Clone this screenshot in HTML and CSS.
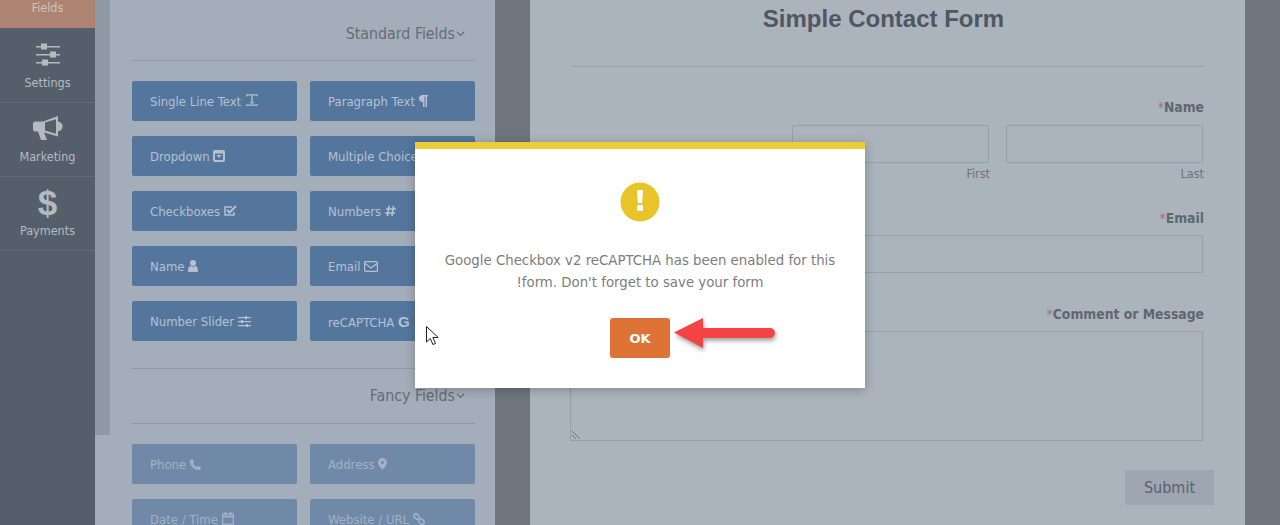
FILE: index.html
```html
<!DOCTYPE html>
<html lang="en">
<head>
    <meta charset="UTF-8">
    <meta name="viewport" content="width=device-width, initial-scale=1.0">
    <title>Simple Contact Form</title>
    <link rel="stylesheet" href="styles.css">
</head>
<body>

<div class="layout">
    <nav class="sidebar">
        <a class="side-item side-active"><span>Fields</span></a>
        <a class="side-item side-settings">
            <svg class="side-icon" width="26" height="24" viewBox="0 0 26 24" fill="currentColor">
                <path d="M1 3h24v1.600H1zM1 11h24v1.600H1zM1 19h24v1.600H1z"/>
                <path d="M6 .5h6v6H6zM15 8.500h6v6h-6zM7 16.500h6v6H7z"/>
            </svg>
            <span>Settings</span>
        </a>
        <a class="side-item">
            <svg class="side-icon" width="30" height="26" viewBox="0 0 30 26" fill="currentColor">
                <path d="M0 9c0-1.500 1-2.500 2.500-2.500H10L25 1v5.500C28 7 29.500 9 29.500 11.500S28 16 25 16.500V21.500L11 17.500l3 7.500H8L5 16.500H2.500C1 16.500 0 15.500 0 14z"/>
                <path fill="#555f6b" d="M12 7.500v8l11 3.200V4.300z"/>
            </svg>
            <span>Marketing</span>
        </a>
        <a class="side-item">
            <span class="side-dollar">$</span>
            <span>Payments</span>
        </a>
    </nav>

    <div class="scroll-track"><div class="scroll-thumb"></div></div>

    <section class="fields-panel">
        <h3 class="group-title group-first">Standard Fields<svg class="chev" width="9" height="6" viewBox="0 0 9 6"><path d="M1 1l3.500 3.500L8 1" fill="none" stroke="currentColor" stroke-width="1.200"/></svg></h3>
        <div class="field-grid">
            <button class="field-btn">Single Line Text
                <svg width="14" height="14" viewBox="0 0 15 14" fill="none" stroke="currentColor" stroke-width="1.400"><path d="M2 3V1.500h11V3M7.500 1.500V10M5.500 10h4M1 12.500h13"/></svg>
            </button>
            <button class="field-btn">Paragraph Text
                <svg width="9" height="12" viewBox="0 0 9 12" fill="currentColor"><path d="M4 0h5v1.500H8V12H6.500V1.500h-1V12H4V7C1.500 7 0 5.500 0 3.500S1.500 0 4 0z"/></svg>
            </button>
            <button class="field-btn">Dropdown
                <svg width="12" height="12" viewBox="0 0 12 12" fill="currentColor"><path fill-rule="evenodd" d="M2 0h8a2 2 0 012 2v8a2 2 0 01-2 2H2a2 2 0 01-2-2V2a2 2 0 012-2zM2 3.500V10h8V3.500zM3.500 5h5L6 8z"/></svg>
            </button>
            <button class="field-btn">Multiple Choice</button>
            <button class="field-btn">Checkboxes
                <svg width="13" height="12" viewBox="0 0 13 12" fill="none" stroke="currentColor" stroke-width="1.500"><path d="M10 7v3H1V2h7"/><path d="M3 5l2.500 2.500L12 1" stroke-width="2"/></svg>
            </button>
            <button class="field-btn">Numbers
                <svg width="11" height="12" viewBox="0 0 11 12" fill="none" stroke="currentColor" stroke-width="1.700"><path d="M4 1L2.500 11M8.500 1L7 11M1 4h10M0 8h10"/></svg>
            </button>
            <button class="field-btn">Name
                <svg width="10" height="12" viewBox="0 0 10 12" fill="currentColor"><circle cx="5" cy="3" r="3"/><path d="M0 11c0-4 1.500-5 2.500-5 1.500 1 3.500 1 5 0 1 0 2.500 1 2.500 5 0 .5-.5 1-1 1H1c-.5 0-1-.5-1-1z"/></svg>
            </button>
            <button class="field-btn">Email
                <svg width="14" height="11" viewBox="0 0 14 11" fill="none" stroke="currentColor" stroke-width="1.200"><rect x=".6" y=".6" width="12.800" height="9.800" rx="1"/><path d="M1 2.500l6 4.500 6-4.500"/></svg>
            </button>
            <button class="field-btn">Number Slider
                <svg width="13" height="11" viewBox="0 0 13 11" fill="currentColor"><path d="M0 1h13v1.200H0zM0 5h13v1.200H0zM0 9h13v1.200H0z"/><path d="M7 0h2v3.200H7zM3 4h2v3.200H3zM8 8h2v3H8z"/></svg>
            </button>
            <button class="field-btn">reCAPTCHA <b class="g-mark">G</b></button>
        </div>

        <hr class="panel-rule rule-fancy">
        <h3 class="group-title">Fancy Fields<svg class="chev" width="9" height="6" viewBox="0 0 9 6"><path d="M1 1l3.500 3.500L8 1" fill="none" stroke="currentColor" stroke-width="1.200"/></svg></h3>
        <div class="field-grid fancy">
            <button class="field-btn">Phone
                <svg width="11" height="11" viewBox="0 0 11 11" fill="currentColor"><path d="M2.500 0L4 3 3 4.200C3.500 5.700 5.300 7.500 6.800 8L8 7l3 1.500c0 1.300-1 2.500-2.500 2.500C4 11 0 7 0 2.500 0 1 1.200 0 2.500 0z"/></svg>
            </button>
            <button class="field-btn">Address
                <svg width="9" height="12" viewBox="0 0 9 12" fill="currentColor"><path fill-rule="evenodd" d="M4.500 0A4.500 4.500 0 019 4.500C9 7 6 10 4.500 12 3 10 0 7 0 4.500A4.500 4.500 0 014.500 0zm0 3a1.500 1.500 0 100 3 1.500 1.500 0 000-3z"/></svg>
            </button>
            <button class="field-btn">Date / Time
                <svg width="12" height="13" viewBox="0 0 12 13" fill="none" stroke="currentColor" stroke-width="1.300"><rect x=".7" y="2" width="10.600" height="10.300"/><path d="M.7 4.500h10.600" stroke-width="2"/><path d="M3.500 0v3M8.500 0v3" stroke-width="1.800"/></svg>
            </button>
            <button class="field-btn">Website / URL
                <svg width="12" height="12" viewBox="0 0 12 12" fill="none" stroke="currentColor" stroke-width="1.500"><rect x=".5" y="1.500" width="6" height="4" rx="2" transform="rotate(45 3.500 3.500)"/><rect x="5.500" y="6.500" width="6" height="4" rx="2" transform="rotate(45 8.500 8.500)"/></svg>
            </button>
        </div>
    </section>

    <main class="form-panel">
        <h1 class="form-title">Simple Contact Form</h1>
        <hr class="form-rule">

        <label class="form-label label-name"><i>*</i>Name</label>
        <div class="name-row">
            <div class="name-col"><div class="text-box"></div><small>First</small></div>
            <div class="name-col"><div class="text-box"></div><small>Last</small></div>
        </div>

        <label class="form-label label-email"><i>*</i>Email</label>
        <div class="text-box"></div>

        <label class="form-label label-comment"><i>*</i>Comment or Message</label>
        <div class="text-area">
            <svg class="grip" width="9" height="9" viewBox="0 0 9 9" fill="none" stroke="#6f7681"><path d="M1 0l8 8M1 4l4 4"/></svg>
        </div>

        <div class="submit-row"><button class="submit-btn">Submit</button></div>
    </main>
</div>

<div class="modal">
    <svg class="modal-icon" width="40" height="40" viewBox="0 0 40 40">
        <circle cx="20" cy="20" r="19.500" fill="#e8c428"/>
        <path d="M17 8h6l-.8 13h-4.400zM17 23h6v6h-6z" fill="#fff"/>
    </svg>
    <p class="modal-text">Google Checkbox v2 reCAPTCHA has been enabled for this<br>!form. Don't forget to save your form</p>
    <button class="ok-btn">OK</button>
</div>

<svg class="callout" width="103" height="36" viewBox="0 0 103 36">
    <path d="M1 15.500L30 1v10h67a5 5 0 010 10H30v10z" fill="#f44245"/>
</svg>

<svg class="pointer" width="14" height="20" viewBox="0 0 14 20">
    <path d="M.5.5v15.500l3.800-3.500 2.600 6 2.600-1.100-2.600-5.900h5.300z" fill="#fff" stroke="#222" stroke-width="1"/>
</svg>

</body>
</html>
```

FILE: styles.css
```css
body {
    font-family: "DejaVu Sans", Arial, sans-serif;
    font-stretch: condensed;
    margin: 0;
    height: 525px;
    overflow: hidden;
    position: relative;
    background-color: #6e757f;
}
.layout {
    display: flex;
    align-items: flex-start;
    height: 525px;
}

/* left menu */
.sidebar {
    width: 95px;
    height: 525px;
    flex: none;
    background-color: #555f6b;
}
.side-item {
    display: flex;
    flex-direction: column;
    align-items: center;
    justify-content: flex-end;
    height: 62px;
    padding-bottom: 11px;
    border-bottom: 1px solid #616a76;
    font-size: 12.500px;
    line-height: 16px;
    color: #b4bac2;
}
.side-active {
    height: 16px;
    padding-bottom: 12px;
    border-bottom: 0;
    background-color: #ac8471;
    color: #d0c4bd;
}
.side-settings {
    height: 63px;
}
.side-icon {
    margin-bottom: 8px;
}
.side-dollar {
    font-family: "Liberation Sans", Arial, sans-serif;
    font-weight: bold;
    font-size: 35px;
    line-height: 32px;
    margin-bottom: 4px;
}
.scroll-track {
    width: 15px;
    height: 525px;
    flex: none;
    background-color: #a4aeba;
}
.scroll-thumb {
    height: 435px;
    background-color: #8f99a5;
}

/* field buttons */
.fields-panel {
    width: 343px;
    height: 525px;
    flex: none;
    padding: 0 20px 0 22px;
    background-color: #a4aeba;
}
.group-title {
    margin: 0;
    height: 37px;
    text-align: right;
    padding-right: 10px;
    font-size: 15.800px;
    font-weight: normal;
    line-height: 20px;
    color: #646c78;
}
.group-first {
    height: 61px;
    padding-top: 24px;
    box-sizing: border-box;
    border-bottom: 1px solid #8f99a6;
    margin-bottom: 20px;
}
.chev {
    margin-left: 1px;
    vertical-align: 2px;
}
.field-grid {
    display: grid;
    grid-template-columns: 165px 165px;
    column-gap: 13px;
    row-gap: 15px;
}
.field-btn {
    height: 40px;
    padding: 0 0 0 18px;
    border: none;
    border-radius: 2px;
    text-align: left;
    white-space: nowrap;
    overflow: hidden;
    font-family: inherit;
    font-stretch: inherit;
    font-size: 13px;
    background-color: #54769d;
    color: #b5c1d0;
}
.field-btn svg {
    vertical-align: -1px;
}
.g-mark {
    font-family: "Liberation Sans", Arial, sans-serif;
    font-size: 15px;
}
.fancy .field-btn {
    background-color: #7189a8;
    color: #a3b1c3;
}
.panel-rule {
    height: 1px;
    margin: 0;
    border: none;
    background-color: #8f99a6;
}
.rule-fancy {
    margin-top: 27px;
    margin-bottom: 17px;
}
.fancy {
    border-top: 1px solid #8f99a6;
    padding-top: 20px;
}

/* form preview */
.form-panel {
    width: 633px;
    height: 525px;
    flex: none;
    margin-left: 35px;
    padding: 0 41px;
    background-color: #abb3bd;
}
.form-title {
    margin: 5px 0 0;
    padding-right: 8px;
    text-align: center;
    font-family: "Liberation Sans", Arial, sans-serif;
    font-stretch: normal;
    font-size: 24px;
    line-height: 28px;
    color: #4f5763;
}
.form-rule {
    height: 1px;
    margin: 33px 0 0 1px;
    border: none;
    background-color: #99a1ac;
}
.form-label {
    display: block;
    text-align: right;
    font-size: 13.800px;
    font-weight: bold;
    line-height: 18px;
    color: #5f6771;
}
.form-label i {
    font-style: normal;
    font-weight: normal;
    color: #a2707c;
}
.label-name {
    margin-top: 31px;
    margin-bottom: 9px;
}
.label-email {
    margin-top: 27px;
    margin-bottom: 8px;
}
.label-comment {
    margin-top: 32px;
    margin-bottom: 8px;
}
.name-row {
    display: flex;
    justify-content: flex-end;
    gap: 17px;
    margin-right: 1px;
}
.name-col {
    width: 197px;
}
.name-col small {
    display: block;
    margin-right: -1px;
    margin-top: 3px;
    text-align: right;
    font-size: 12.500px;
    line-height: 16px;
    color: #6c747f;
}
.text-box {
    height: 36px;
    margin: 0 1px 0 -1px;
    border: 1px solid #979fa9;
    border-radius: 2px;
}
.name-col .text-box {
    margin: 0;
}
.text-area {
    position: relative;
    height: 108px;
    margin: 0 1px 0 -1px;
    border: 1px solid #979fa9;
}
.grip {
    position: absolute;
    left: 0;
    bottom: 0;
}
.submit-row {
    display: flex;
    justify-content: flex-end;
    margin: 29px -10px 0 0;
}
.submit-btn {
    width: 89px;
    height: 35px;
    border: none;
    font-family: inherit;
    font-stretch: inherit;
    font-size: 16px;
    background-color: #9ea6b1;
    color: #5a626e;
}

/* alert on top */
.modal {
    position: absolute;
    left: 415px;
    top: 142px;
    width: 450px;
    height: 239px;
    border-top: 7px solid #eccd39;
    background-color: #fff;
    box-shadow: 0 2px 10px rgba(0, 0, 0, 0.25);
    text-align: center;
}
.modal-icon {
    display: block;
    margin: 33px auto 0;
}
.modal-text {
    margin: 27px 0 0;
    font-size: 14.800px;
    line-height: 22px;
    color: #7d7d7d;
}
.ok-btn {
    display: block;
    width: 60px;
    height: 40px;
    margin: 25px auto 0;
    padding: 0;
    border: none;
    border-radius: 3px;
    font-family: "DejaVu Sans", sans-serif;
    font-stretch: normal;
    font-size: 13px;
    font-weight: bold;
    background-color: #dd7337;
    color: #fff;
}
.callout {
    position: absolute;
    left: 673px;
    top: 317px;
    filter: drop-shadow(1px 3px 2px rgba(0, 0, 0, 0.35));
}
.pointer {
    position: absolute;
    left: 426px;
    top: 326px;
}
```
